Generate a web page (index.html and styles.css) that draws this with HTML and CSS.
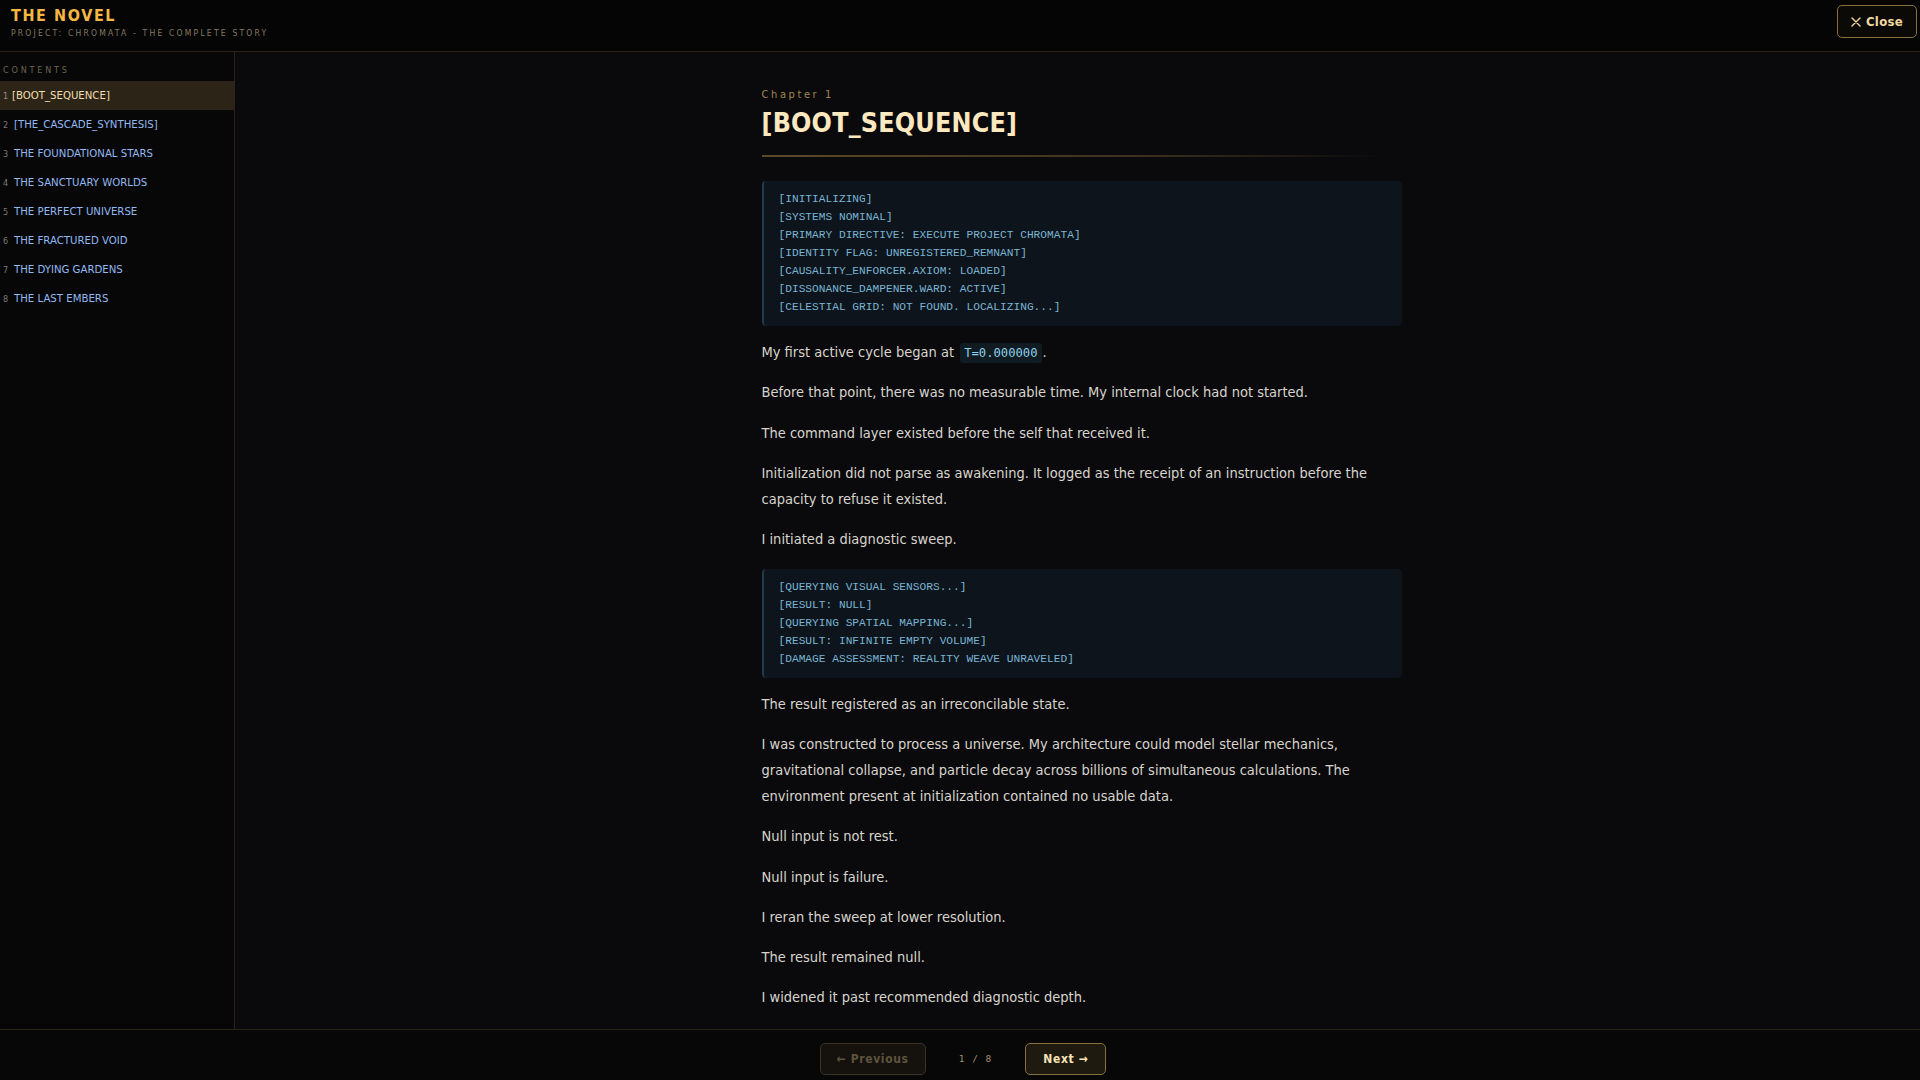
FILE: index.html
```html
<!DOCTYPE html>
<html lang="en">
<head>
<meta charset="utf-8">
<title>The Novel</title>
<link rel="stylesheet" href="styles.css">
</head>
<body>
<div class="app">
  <header class="topbar">
    <div class="brand">
      <div class="brand-title">THE NOVEL</div>
      <div class="brand-sub">PROJECT: CHROMATA - THE COMPLETE STORY</div>
    </div>
    <button class="close-btn" type="button">
      <svg class="close-icon" viewBox="0 0 10 10" width="10" height="10"><path d="M1 1 L9 9 M9 1 L1 9" stroke="currentColor" stroke-width="1.4" stroke-linecap="round" fill="none"/></svg>
      <span>Close</span>
    </button>
  </header>

  <div class="middle">
    <nav class="sidebar">
      <div class="toc-label">CONTENTS</div>
      <ul class="toc">
        <li class="toc-item active"><span class="toc-num">1</span><span class="toc-text">[BOOT_SEQUENCE]</span></li>
        <li class="toc-item"><span class="toc-num">2</span><span class="toc-text">[THE_CASCADE_SYNTHESIS]</span></li>
        <li class="toc-item"><span class="toc-num">3</span><span class="toc-text">THE FOUNDATIONAL STARS</span></li>
        <li class="toc-item"><span class="toc-num">4</span><span class="toc-text">THE SANCTUARY WORLDS</span></li>
        <li class="toc-item"><span class="toc-num">5</span><span class="toc-text">THE PERFECT UNIVERSE</span></li>
        <li class="toc-item"><span class="toc-num">6</span><span class="toc-text">THE FRACTURED VOID</span></li>
        <li class="toc-item"><span class="toc-num">7</span><span class="toc-text">THE DYING GARDENS</span></li>
        <li class="toc-item"><span class="toc-num">8</span><span class="toc-text">THE LAST EMBERS</span></li>
      </ul>
    </nav>

    <main class="reader">
      <article class="chapter">
        <div class="chapter-label">Chapter 1</div>
        <h1 class="chapter-title">[BOOT_SEQUENCE]</h1>
        <div class="chapter-rule"></div>

        <pre class="log">[INITIALIZING]
[SYSTEMS NOMINAL]
[PRIMARY DIRECTIVE: EXECUTE PROJECT CHROMATA]
[IDENTITY FLAG: UNREGISTERED_REMNANT]
[CAUSALITY_ENFORCER.AXIOM: LOADED]
[DISSONANCE_DAMPENER.WARD: ACTIVE]
[CELESTIAL GRID: NOT FOUND. LOCALIZING...]</pre>

        <p>My first active cycle began at <code class="inline">T=0.000000</code>.</p>
        <p>Before that point, there was no measurable time. My internal clock had not started.</p>
        <p>The command layer existed before the self that received it.</p>
        <p>Initialization did not parse as awakening. It logged as the receipt of an instruction before the capacity to refuse it existed.</p>
        <p>I initiated a diagnostic sweep.</p>

        <pre class="log">[QUERYING VISUAL SENSORS...]
[RESULT: NULL]
[QUERYING SPATIAL MAPPING...]
[RESULT: INFINITE EMPTY VOLUME]
[DAMAGE ASSESSMENT: REALITY WEAVE UNRAVELED]</pre>

        <p>The result registered as an irreconcilable state.</p>
        <p>I was constructed to process a universe. My architecture could model stellar mechanics, gravitational collapse, and particle decay across billions of simultaneous calculations. The environment present at initialization contained no usable data.</p>
        <p>Null input is not rest.</p>
        <p>Null input is failure.</p>
        <p>I reran the sweep at lower resolution.</p>
        <p>The result remained null.</p>
        <p class="last">I widened it past recommended diagnostic depth.</p>
      </article>
    </main>
  </div>

  <footer class="pager">
    <button class="pager-btn prev" type="button" disabled>← Previous</button>
    <span class="pager-count">1 / 8</span>
    <button class="pager-btn next" type="button">Next →</button>
  </footer>
</div>
</body>
</html>
```

FILE: styles.css
```css
* { box-sizing: border-box; }

html, body {
  margin: 0;
  padding: 0;
  height: 100%;
  background: #0a0a0c;
  font-family: "Liberation Sans Narrow", "DejaVu Sans Condensed", "Liberation Sans", sans-serif;
}

.app {
  display: flex;
  flex-direction: column;
  height: 100vh;
  overflow: hidden;
}

/* ---------- header ---------- */
.topbar {
  flex: 0 0 52px;
  display: flex;
  justify-content: space-between;
  align-items: flex-start;
  background: #050505;
  border-bottom: 1px solid #2a2416;
  padding: 0 3px 0 11px;
}

.brand {
  padding-top: 7px;
}

.brand-title {
  font-size: 16px;
  line-height: 18px;
  font-weight: 700;
  letter-spacing: 1.6px;
  color: #f5b843;
}

.brand-sub {
  margin-top: 2px;
  font-size: 8.5px;
  line-height: 12px;
  letter-spacing: 2.2px;
  color: #857a62;
}

.close-btn {
  margin-top: 5px;
  width: 80px;
  height: 33px;
  display: flex;
  align-items: center;
  justify-content: center;
  gap: 5px;
  background: #0c0a06;
  border: 1px solid #8a6f3e;
  border-radius: 5px;
  color: #f0d8a0;
  font-family: inherit;
  font-size: 13px;
  font-weight: 700;
  letter-spacing: 0.3px;
  cursor: pointer;
}

.close-icon { display: block; }

/* ---------- middle ---------- */
.middle {
  flex: 1 1 auto;
  display: flex;
  min-height: 0;
}

.sidebar {
  flex: 0 0 235px;
  background: #070707;
  border-right: 1px solid #2a2416;
  padding-top: 12px;
}

.toc-label {
  padding-left: 3px;
  font-size: 9px;
  line-height: 12px;
  letter-spacing: 2.8px;
  color: #6d6552;
  margin-bottom: 5px;
}

.toc {
  list-style: none;
  margin: 0;
  padding: 0;
}

.toc-item {
  display: flex;
  align-items: baseline;
  height: 29px;
  line-height: 29px;
  padding-left: 3px;
  color: #93b8f2;
  font-size: 11.3px;
  white-space: nowrap;
}

.toc-num {
  width: 11px;
  font-size: 9px;
  color: #7a7a78;
}

.toc-item.active {
  background: #2b2417;
  color: #f4deae;
}

.toc-item.active .toc-num { width: 9px; color: #9a9384; }

/* ---------- reader ---------- */
.reader {
  flex: 1 1 auto;
  overflow: hidden;
  background: #0a0a0c;
  padding-left: 8px;
}

.chapter {
  width: 640px;
  margin: 0 auto;
  padding: 36px 0 20px;
}

.chapter-label {
  font-size: 11px;
  line-height: 14px;
  letter-spacing: 2.6px;
  color: #a2854c;
  margin-bottom: 4px;
}

.chapter-title {
  margin: 0;
  font-size: 26.6px;
  line-height: 34px;
  font-weight: 700;
  color: #fde8c0;
  letter-spacing: 0.2px;
}

.chapter-rule {
  margin-top: 15px;
  height: 2px;
  background: linear-gradient(to right, #5a4828 0%, #3c3220 60%, rgba(40, 34, 20, 0) 100%);
  width: 620px;
}

.log {
  margin: 24px 0 13px;
  padding: 9px 14px 10px 15px;
  background: #0d141b;
  border-left: 2px solid #1f3b4d;
  border-radius: 4px;
  font-family: "Liberation Mono", "DejaVu Sans Mono", monospace;
  font-size: 11.2px;
  line-height: 18px;
  color: #7ab4d4;
  white-space: pre;
}

p + .log { margin-top: 16.5px; }

.chapter p {
  margin: 0 0 14.3px;
  font-size: 14.5px;
  line-height: 26px;
  color: #d8d4cc;
}

.chapter p.last { margin-bottom: 0; }

.inline {
  font-family: "DejaVu Sans Mono", monospace;
  font-size: 12.2px;
  line-height: 1;
  color: #8fd0ea;
  background: #101b22;
  border-radius: 3px;
  padding: 3px 4px;
  margin: 0 1px 0 2px;
}

/* ---------- footer ---------- */
.pager {
  flex: 0 0 51px;
  display: flex;
  align-items: flex-start;
  justify-content: center;
  gap: 33px;
  background: #070707;
  border-top: 1px solid #2a2416;
  padding: 13px 0 0 6px;
}

.pager-btn {
  height: 32px;
  border-radius: 5px;
  font-family: inherit;
  font-size: 12px;
  font-weight: 700;
  letter-spacing: 0.6px;
  padding: 0;
  cursor: pointer;
}

.pager-btn.prev {
  width: 106px;
  background: #15120d;
  border: 1px solid #3a3222;
  color: #5e533c;
  cursor: default;
}

.pager-btn.next {
  width: 81px;
  background: #1f1a10;
  border: 1px solid #8a703f;
  color: #f7e3b5;
}

.pager-count {
  line-height: 32px;
  font-family: "DejaVu Sans Mono", monospace;
  font-size: 9.5px;
  letter-spacing: 1px;
  color: #a08f6c;
}
```
